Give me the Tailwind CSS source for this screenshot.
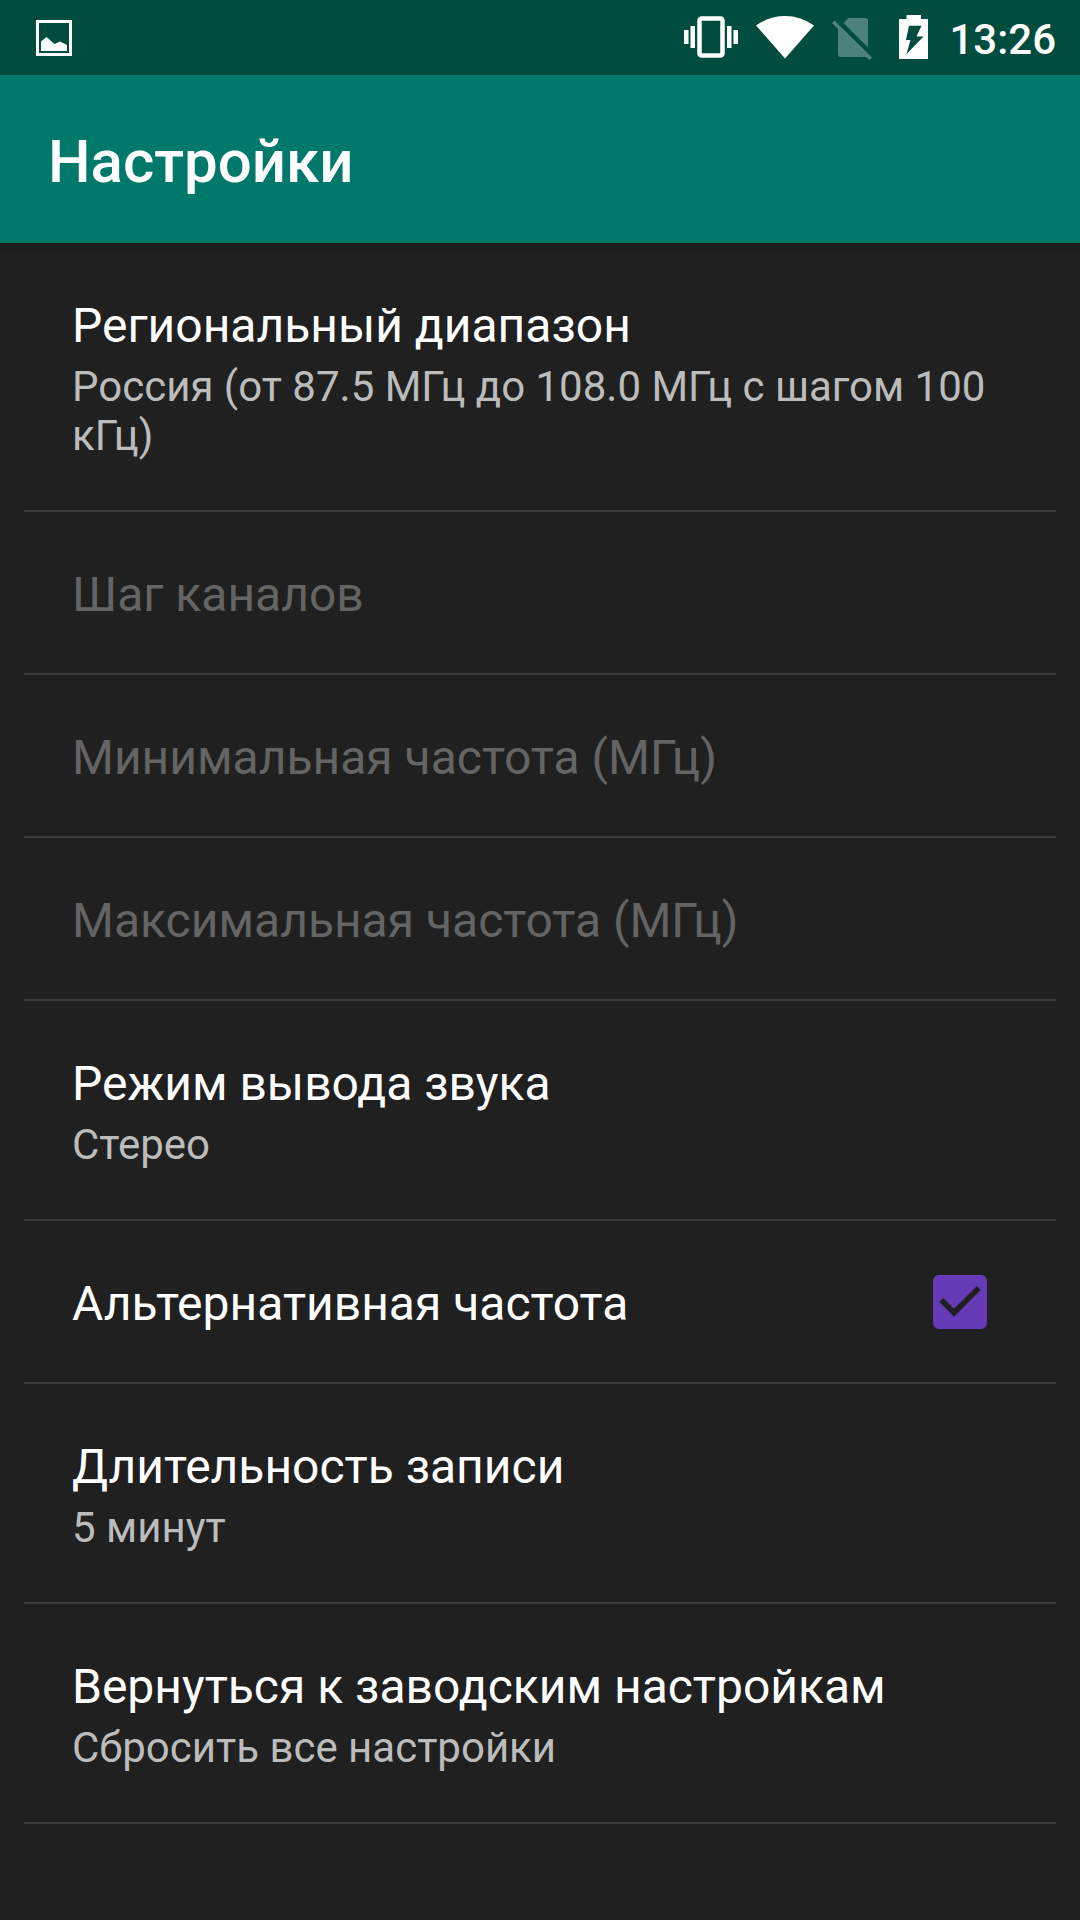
<!DOCTYPE html>
<html lang="ru">
<head>
<meta charset="utf-8">
<meta name="viewport" content="width=device-width, initial-scale=1">
<title>Настройки</title>
<script src="https://cdn.jsdelivr.net/npm/@tailwindcss/browser@4"></script>
</head>
<body class="flex min-h-screen flex-col bg-[#202020] font-[Roboto,sans-serif] text-white">
<div class="flex h-[75px] items-center justify-between bg-[#004d40] pl-9 pr-6">
  <svg class="h-[75px] w-9" viewBox="0 0 36 75" fill="none" aria-hidden="true">
    <path d="M1.5 21.5H34.5V54.5H1.5Z" stroke="#fff" stroke-width="3"/>
    <path d="M5 51V41.5L10.5 37L18.5 44L24 41.5L31 45V51Z" fill="#fff"/>
  </svg>
  <div class="flex items-center">
    <svg class="h-[75px] w-[54px]" viewBox="0 0 54 75" fill="none" aria-hidden="true">
      <rect x="15.5" y="18.5" width="23" height="37" rx="2" stroke="#fff" stroke-width="4.5"/>
      <path d="M0 30H4.5V44H0ZM6.5 26H11V48H6.5ZM43 26H47.5V48H43ZM49.5 30H54V44H49.5Z" fill="#fff"/>
    </svg>
    <svg class="ml-[18px] h-[75px] w-[58px]" viewBox="0 0 58 75" aria-hidden="true"><path d="M29 58.5L0 25.5Q13 16 29 16T58 25.5Z" fill="#fff"/></svg>
    <svg class="ml-[18px] h-[75px] w-10" viewBox="0 0 40 75" aria-hidden="true">
      <g fill="#4d827a">
        <path d="M11.5 23L16.5 18H33Q36 18 36 21V47.5Z"/>
        <path d="M2.5 20.5L40 57.5L37.5 60L34 57H9Q6 57 6 54V29L0 23Z"/>
      </g>
    </svg>
    <svg class="ml-[27px] h-[75px] w-[29px]" viewBox="0 0 29 75" aria-hidden="true"><path d="M7.5 15H22V19H29V59H0V19H7.5ZM10 25.7L7 40H11.5L7.5 54L24.5 36.5H17.5L22.5 25.7Z" fill="#fff" fill-rule="evenodd"/></svg>
    <time class="ml-[21px] pt-1 text-[42px] leading-12 font-medium">13:26</time>
  </div>
</div>
<header class="flex h-[168px] items-center bg-[#00796b] pt-1.5 pl-12 shadow-[0_4px_8px_rgba(0,0,0,0.25)]">
  <h1 class="text-[60px] leading-[72px] font-medium">Настройки</h1>
</header>
<main class="px-6">
  <button type="button" class="block w-full border-b-2 border-[#3b3b3b] pt-[54px] pr-12 pb-[50px] pl-12 text-left">
    <span class="block text-5xl leading-[57px]">Региональный диапазон</span>
    <span class="mt-2 block text-[42px] leading-[49px] text-[#bcbcbc]">Россия (от 87.5 МГц до 108.0 МГц с шагом 100 кГц)</span>
  </button>
  <button type="button" disabled class="block w-full border-b-2 border-[#3b3b3b] pt-[54px] pr-12 pb-[50px] pl-12 text-left text-[#646464]">
    <span class="block text-5xl leading-[57px]">Шаг каналов</span>
  </button>
  <button type="button" disabled class="block w-full border-b-2 border-[#3b3b3b] pt-[54px] pr-12 pb-[50px] pl-12 text-left text-[#646464]">
    <span class="block text-5xl leading-[57px]">Минимальная частота (МГц)</span>
  </button>
  <button type="button" disabled class="block w-full border-b-2 border-[#3b3b3b] pt-[54px] pr-12 pb-[50px] pl-12 text-left text-[#646464]">
    <span class="block text-5xl leading-[57px]">Максимальная частота (МГц)</span>
  </button>
  <button type="button" class="block w-full border-b-2 border-[#3b3b3b] pt-[54px] pr-12 pb-[50px] pl-12 text-left">
    <span class="block text-5xl leading-[57px]">Режим вывода звука</span>
    <span class="mt-2 block text-[42px] leading-[49px] text-[#bcbcbc]">Стерео</span>
  </button>
  <label for="alt-frequency" class="flex items-start justify-between border-b-2 border-[#3b3b3b] pt-[54px] pr-[69px] pb-[50px] pl-12">
    <span class="text-5xl leading-[57px]">Альтернативная частота</span>
    <span class="grid size-[54px] shrink-0">
      <input id="alt-frequency" type="checkbox" checked class="peer col-start-1 row-start-1 size-[54px] appearance-none rounded-md border-4 border-[#bcbcbc] checked:border-[#673ab7] checked:bg-[#673ab7]">
      <svg class="pointer-events-none invisible col-start-1 row-start-1 size-[54px] peer-checked:visible" viewBox="0 0 54 54" aria-hidden="true"><path d="M6.3 26.7L10.3 23L21 33.7L44 11L47.7 15L21 41.7Z" fill="#202020"/></svg>
    </span>
  </label>
  <button type="button" class="block w-full border-b-2 border-[#3b3b3b] pt-[54px] pr-12 pb-[50px] pl-12 text-left">
    <span class="block text-5xl leading-[57px]">Длительность записи</span>
    <span class="mt-2 block text-[42px] leading-[49px] text-[#bcbcbc]">5 минут</span>
  </button>
  <button type="button" class="block w-full border-b-2 border-[#3b3b3b] pt-[54px] pr-12 pb-[50px] pl-12 text-left">
    <span class="block text-5xl leading-[57px]">Вернуться к заводским настройкам</span>
    <span class="mt-2 block text-[42px] leading-[49px] text-[#bcbcbc]">Сбросить все настройки</span>
  </button>
</main>
</body>
</html>
